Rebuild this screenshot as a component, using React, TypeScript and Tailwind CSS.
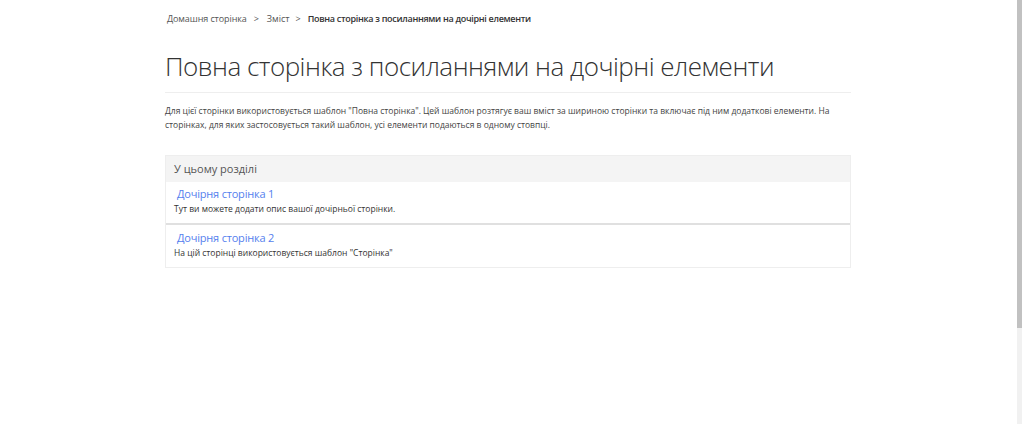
import React from "react";

export default function App() {
  const font = { fontFamily: '"Open Sans", "Noto Sans", sans-serif' };
  return (
    <div className="flex h-[424px] w-[1022px] bg-white overflow-hidden" style={font}>
      <div className="flex-1">
        <div className="ml-[165px] w-[686px]">
          <div className="pt-[12px] pl-[2px] flex items-center text-[9px] text-[#555] leading-[14px]">
            <span className="tracking-[-0.1px]">Домашня сторінка</span>
            <span className="ml-[7px] mr-[8px]">&gt;</span>
            <span>Зміст</span>
            <span className="ml-[6px] mr-[7px]">&gt;</span>
            <span className="font-semibold text-[#333] tracking-[-0.3px]">Повна сторінка з посиланнями на дочірні елементи</span>
          </div>
          <h1 className="mt-[22px] text-[26px] font-light text-[#333] leading-[36px] tracking-[-0.5px] pb-[8px] border-b border-[#eeeeee]">
            Повна сторінка з посиланнями на дочірні елементи
          </h1>
          <p className="mt-[11px] text-[8.5px] leading-[14px] text-[#444] pr-[10px]">
            Для цієї сторінки використовується шаблон "Повна сторінка". Цей шаблон розтягує ваш вміст за шириною сторінки та включає під ним додаткові елементи. На сторінках, для яких застосовується такий шаблон, усі елементи подаються в одному стовпці.
          </p>
          <div className="mt-[23px] border border-[#eeeeee]">
            <div className="h-[26px] bg-[#f4f4f4] flex items-center px-[8px] text-[11px] text-[#555]">
              У цьому розділі
            </div>
            <div className="px-[8px] pt-[3px] pb-[8px] border-b-2 border-[#e0e0e0]">
              <div className="pl-[3px] text-[11px] leading-[17px] tracking-[-0.2px] text-[#5580ee]">Дочірня сторінка 1</div>
              <div className="text-[8.5px] leading-[13px] text-[#333]">Тут ви можете додати опис вашої дочірньої сторінки.</div>
            </div>
            <div className="px-[8px] pt-[4px] pb-[8px]">
              <div className="pl-[3px] text-[11px] leading-[17px] tracking-[-0.2px] text-[#5580ee]">Дочірня сторінка 2</div>
              <div className="text-[8.5px] leading-[13px] text-[#333]">На цій сторінці використовується шаблон "Сторінка"</div>
            </div>
          </div>
        </div>
      </div>
      <div className="w-[5px] h-full bg-[#f1f1f1] flex flex-col">
        <div className="h-[328px] bg-[#c1c1c1]" />
      </div>
    </div>
  );
}
